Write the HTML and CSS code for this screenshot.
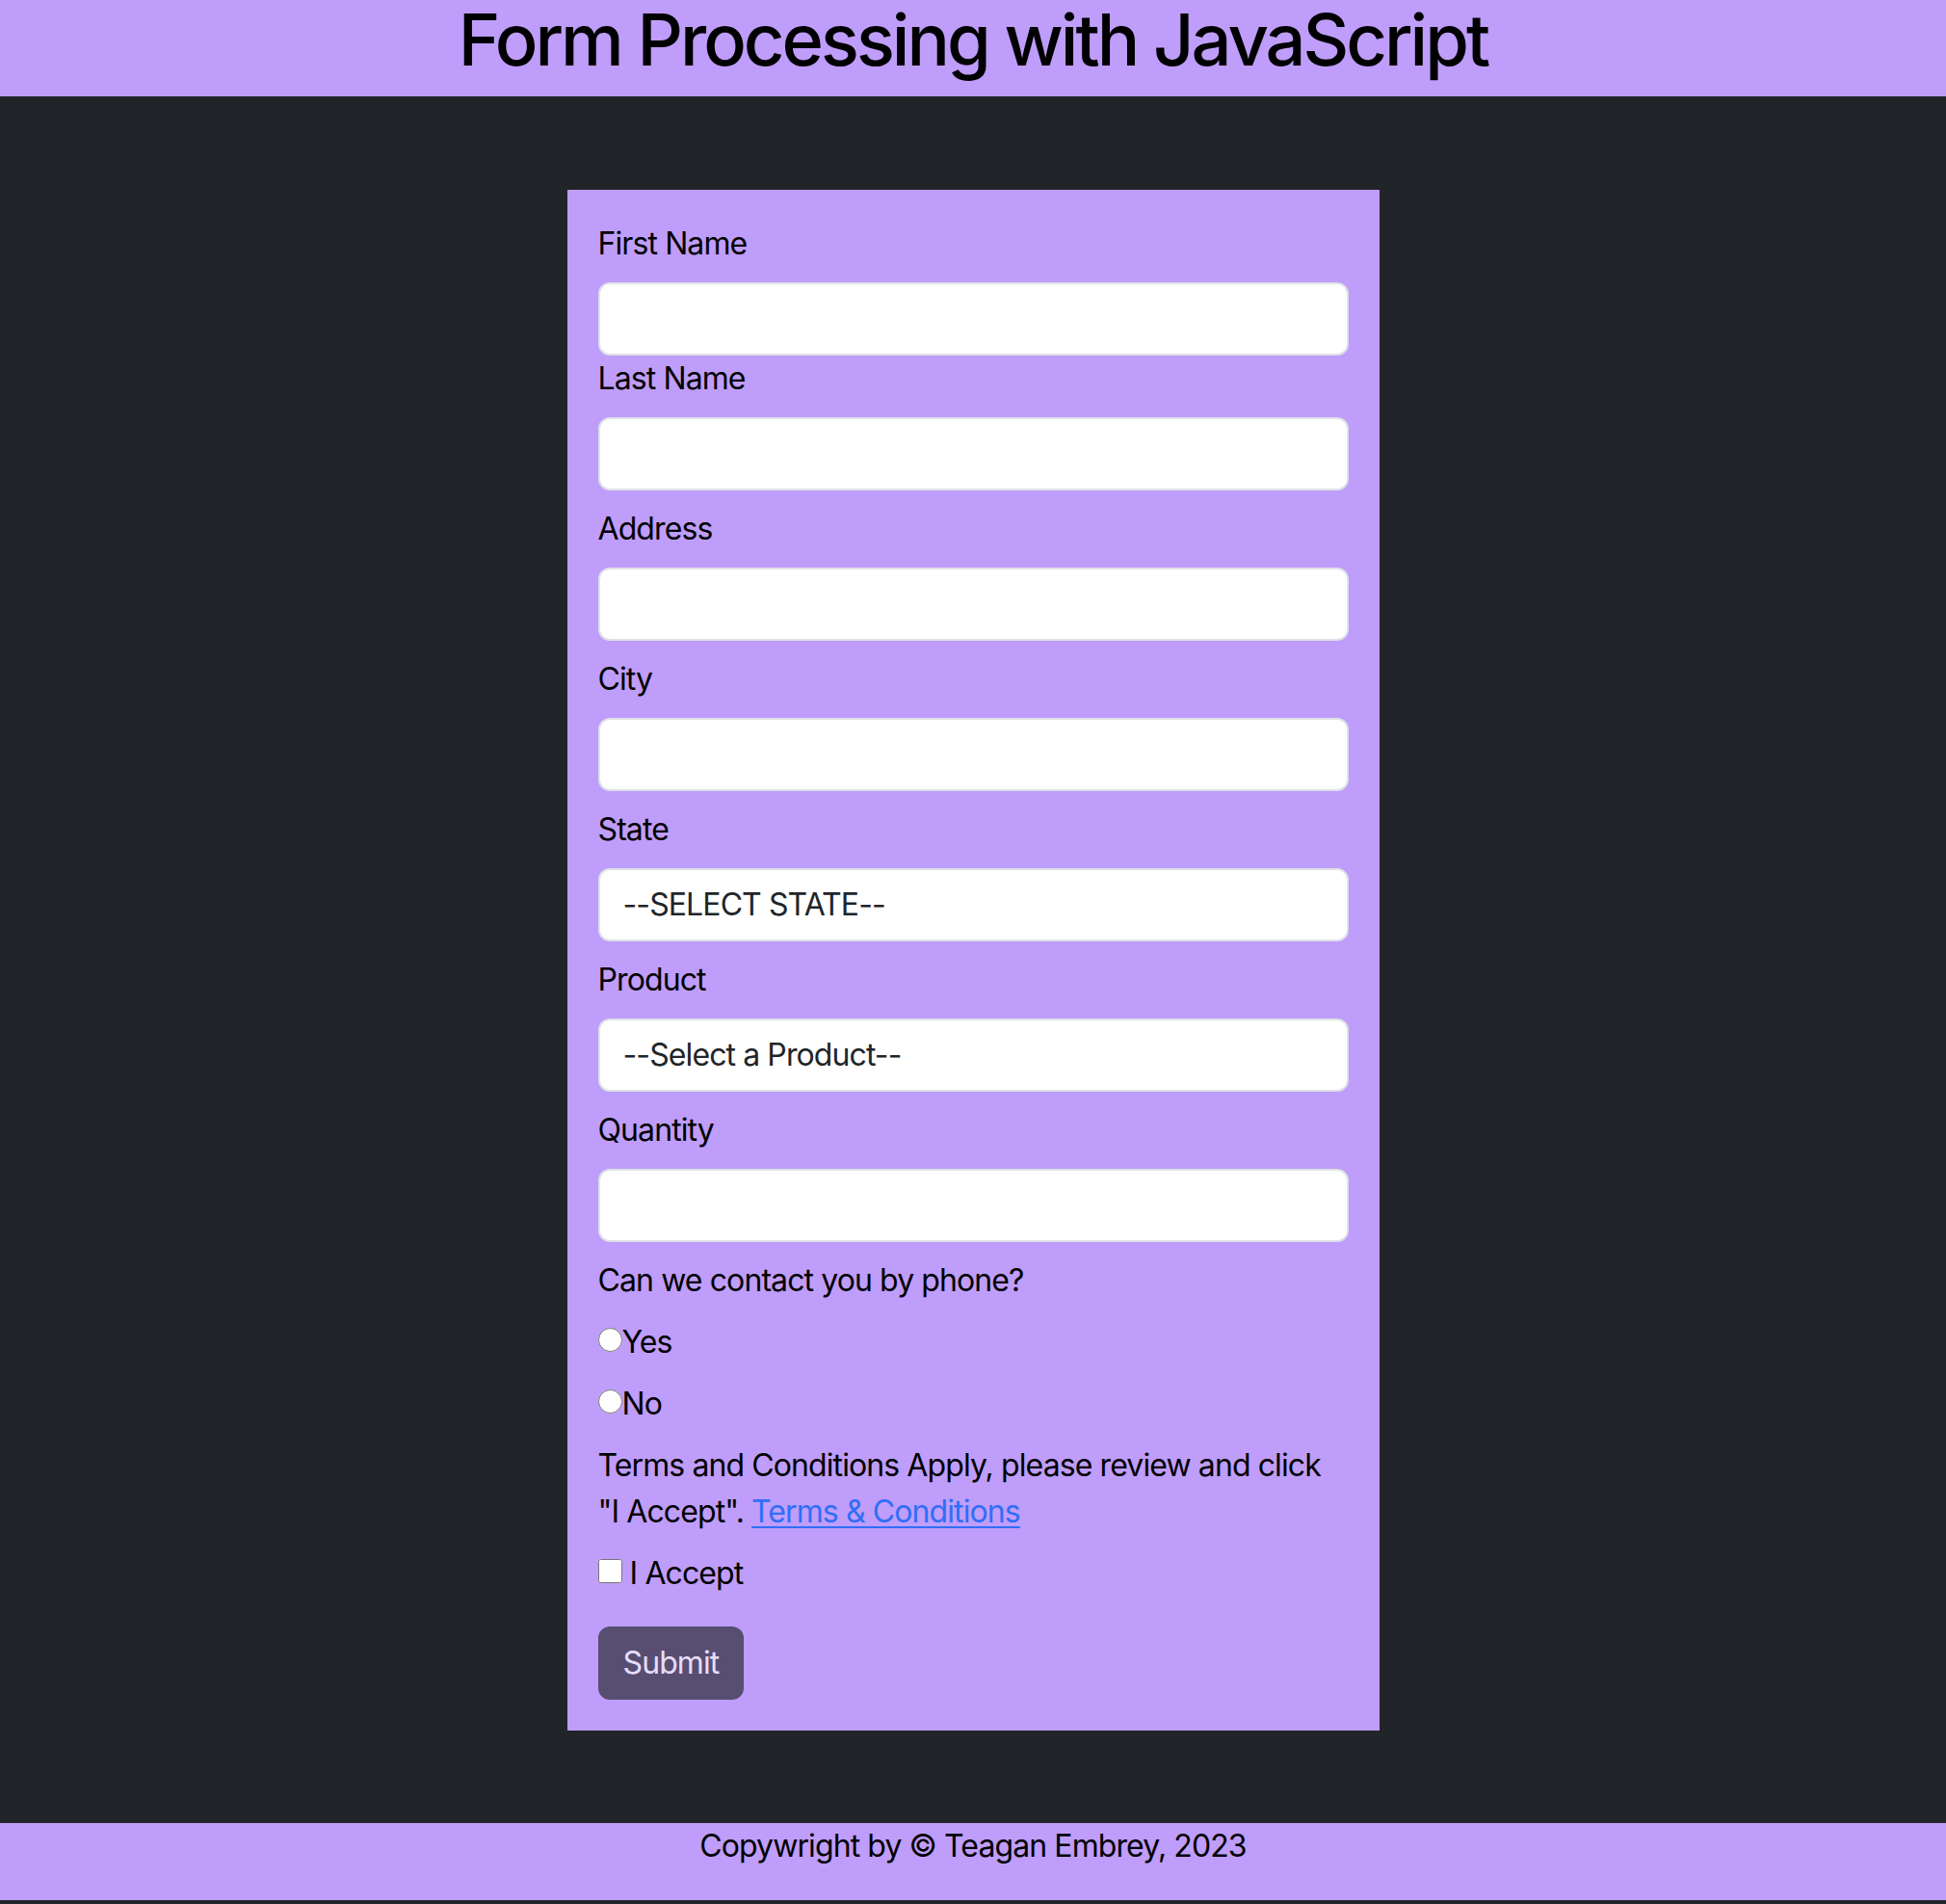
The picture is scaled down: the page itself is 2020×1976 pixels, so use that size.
FILE: index.html
```html
<!DOCTYPE html>
<html lang="en">
<head>
<meta charset="utf-8">
<title>Form Processing with JavaScript</title>
<link rel="stylesheet" href="styles.css">
</head>
<body>
<header class="site-header">
  <h1 class="site-title">Form Processing with JavaScript</h1>
</header>
<main class="main">
  <form class="order-card">
    <div class="field field-flush">
      <label class="field-label" for="fname">First Name</label>
      <input class="field-input" id="fname" type="text">
    </div>
    <div class="field field-flush">
      <label class="field-label" for="lname">Last Name</label>
      <input class="field-input" id="lname" type="text">
    </div>
    <div class="field">
      <label class="field-label" for="address">Address</label>
      <input class="field-input" id="address" type="text">
    </div>
    <div class="field">
      <label class="field-label" for="city">City</label>
      <input class="field-input" id="city" type="text">
    </div>
    <div class="field">
      <label class="field-label" for="state">State</label>
      <select class="field-input field-select" id="state">
        <option>--SELECT STATE--</option>
      </select>
    </div>
    <div class="field">
      <label class="field-label" for="product">Product</label>
      <select class="field-input field-select" id="product">
        <option>--Select a Product--</option>
      </select>
    </div>
    <div class="field">
      <label class="field-label" for="qty">Quantity</label>
      <input class="field-input" id="qty" type="text">
    </div>
    <p class="line">Can we contact you by phone?</p>
    <p class="line"><input class="radio" type="radio" name="phone" id="yes"><label for="yes">Yes</label></p>
    <p class="line"><input class="radio" type="radio" name="phone" id="no"><label for="no">No</label></p>
    <p class="line">Terms and Conditions Apply, please review and click "I Accept". <a class="terms-link" href="#">Terms &amp; Conditions</a></p>
    <p class="line line-accept"><input class="check" type="checkbox" id="accept"> <label for="accept">I Accept</label></p>
    <button class="submit-btn" type="button" disabled>Submit</button>
  </form>
</main>
<footer class="site-footer">
  <p class="footer-text">Copywright by © Teagan Embrey, 2023</p>
</footer>
</body>
</html>
```

FILE: styles.css
```css
* { box-sizing: border-box; }

html, body {
  margin: 0;
  padding: 0;
}

body {
  background: #212529;
  font-family: Inter, "Liberation Sans", sans-serif;
  color: #000;
  font-size: 32px;
  line-height: 48px;
  letter-spacing: -0.9px;
  padding-bottom: 3px;
}

.site-header {
  background: #bf9dfa;
  height: 100px;
  text-align: center;
}

.site-title {
  margin: 0;
  font-size: 74px;
  line-height: 82px;
  font-weight: 500;
  letter-spacing: -3px;
}

.main {
  padding: 97px 0 96px;
  display: flex;
  justify-content: center;
}

.order-card {
  width: 843px;
  background: #bf9dfa;
  padding: 32px;
  margin: 0;
}

.field {
  margin-top: 16px;
}

.field-flush {
  margin-top: 0;
}

.field-label {
  display: block;
  margin-bottom: 16px;
}

.field-input {
  display: block;
  width: 100%;
  height: 76px;
  padding: 12px 24px;
  font: inherit;
  line-height: 48px;
  letter-spacing: -0.9px;
  color: #212529;
  background: #fff;
  border: 2px solid #dee2e6;
  border-radius: 12px;
  outline: none;
}

.field-select {
  appearance: none;
  -webkit-appearance: none;
}

.line {
  margin: 16px 0 0;
}

.radio, .check {
  width: 25px;
  height: 25px;
  margin: 0;
  vertical-align: 1px;
}

.terms-link {
  color: #2f6ef7;
  text-decoration: underline;
  text-underline-offset: 4px;
  text-decoration-thickness: 2px;
}

.submit-btn {
  display: block;
  margin-top: 31px;
  height: 76px;
  padding: 12px 24px;
  font: inherit;
  line-height: 48px;
  letter-spacing: -0.9px;
  color: #fff;
  background: #212529;
  border: 2px solid #212529;
  border-radius: 12px;
  opacity: 0.65;
}

.site-footer {
  background: #bf9dfa;
  text-align: center;
}

.footer-text {
  margin: 0;
  padding-bottom: 32px;
}
```
